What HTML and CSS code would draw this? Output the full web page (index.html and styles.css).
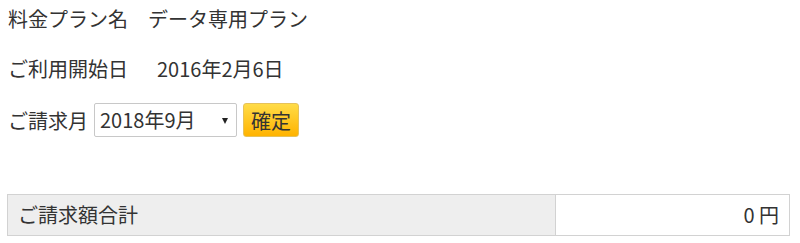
FILE: index.html
```html
<!DOCTYPE html>
<html lang="ja">
<head>
    <meta charset="UTF-8">
    <title>ご請求額</title>
    <link rel="stylesheet" href="styles.css">
</head>
<body>
    <!-- 契約情報 -->
    <section class="info">
        <p class="info-row"><span class="info-label">料金プラン名</span><span class="info-value">データ専用プラン</span></p>
        <p class="info-row"><span class="info-label">ご利用開始日</span><span class="info-value info-date">2016年2月6日</span></p>
        <form class="month-form">
            <label for="month">ご請求月</label>
            <div class="select-box">
                <select id="month">
                    <option>2018年9月</option>
                    <option>2018年8月</option>
                    <option>2018年7月</option>
                </select>
            </div>
            <button type="button" class="btn-ok">確定</button>
        </form>
    </section>

    <!-- ご請求額 -->
    <table class="bill-table">
        <tr>
            <th>ご請求額合計</th>
            <td>0 円</td>
        </tr>
    </table>
</body>
</html>
```

FILE: styles.css
```css
/* General */
body {
    margin: 0;
    font-family: "Noto Sans CJK JP", "Noto Sans", sans-serif;
    font-size: 20px;
    color: #333;
    background: #fff;
}

/* Info rows */
.info {
    padding: 4px 8px 0;
}

.info-row {
    margin: 0 0 20px;
    line-height: 30px;
    display: flex;
}

.info-label {
    width: 140px;
}

.info-date {
    padding-left: 9px;
}

/* Month form */
.month-form {
    display: flex;
    align-items: center;
    height: 34px;
    margin-top: -1px;
}

.month-form label {
    margin-right: 6px;
}

.select-box {
    position: relative;
    width: 143px;
    height: 34px;
    box-sizing: border-box;
    border: 1px solid #c8c8c8;
    border-radius: 2px;
    background: #fff;
}

.select-box select {
    appearance: none;
    -webkit-appearance: none;
    border: none;
    background: transparent;
    font: inherit;
    color: #333;
    width: 100%;
    height: 100%;
    padding: 0 0 0 5px;
    line-height: 32px;
}

.select-box::after {
    content: "";
    position: absolute;
    right: 8px;
    top: 14px;
    border-left: 3px solid transparent;
    border-right: 3px solid transparent;
    border-top: 6px solid #222;
    pointer-events: none;
}

.btn-ok {
    margin-left: 6px;
    width: 56px;
    height: 34px;
    box-sizing: border-box;
    font: inherit;
    color: #333;
    padding: 0;
    border: 1px solid #e6c25a;
    border-radius: 3px;
    background: linear-gradient(#ffdc48, #ffb300);
    cursor: pointer;
}

/* Bill table */
.bill-table {
    border-collapse: collapse;
    margin: 57px 0 0 7px;
    width: 783px;
}

.bill-table th,
.bill-table td {
    border: 1px solid #d2d2d2;
    height: 40px;
    padding: 0 10px;
    font-weight: normal;
    line-height: 1;
}

.bill-table th {
    background: #eee;
    text-align: left;
    width: 527px;
}

.bill-table td {
    text-align: right;
}
```
